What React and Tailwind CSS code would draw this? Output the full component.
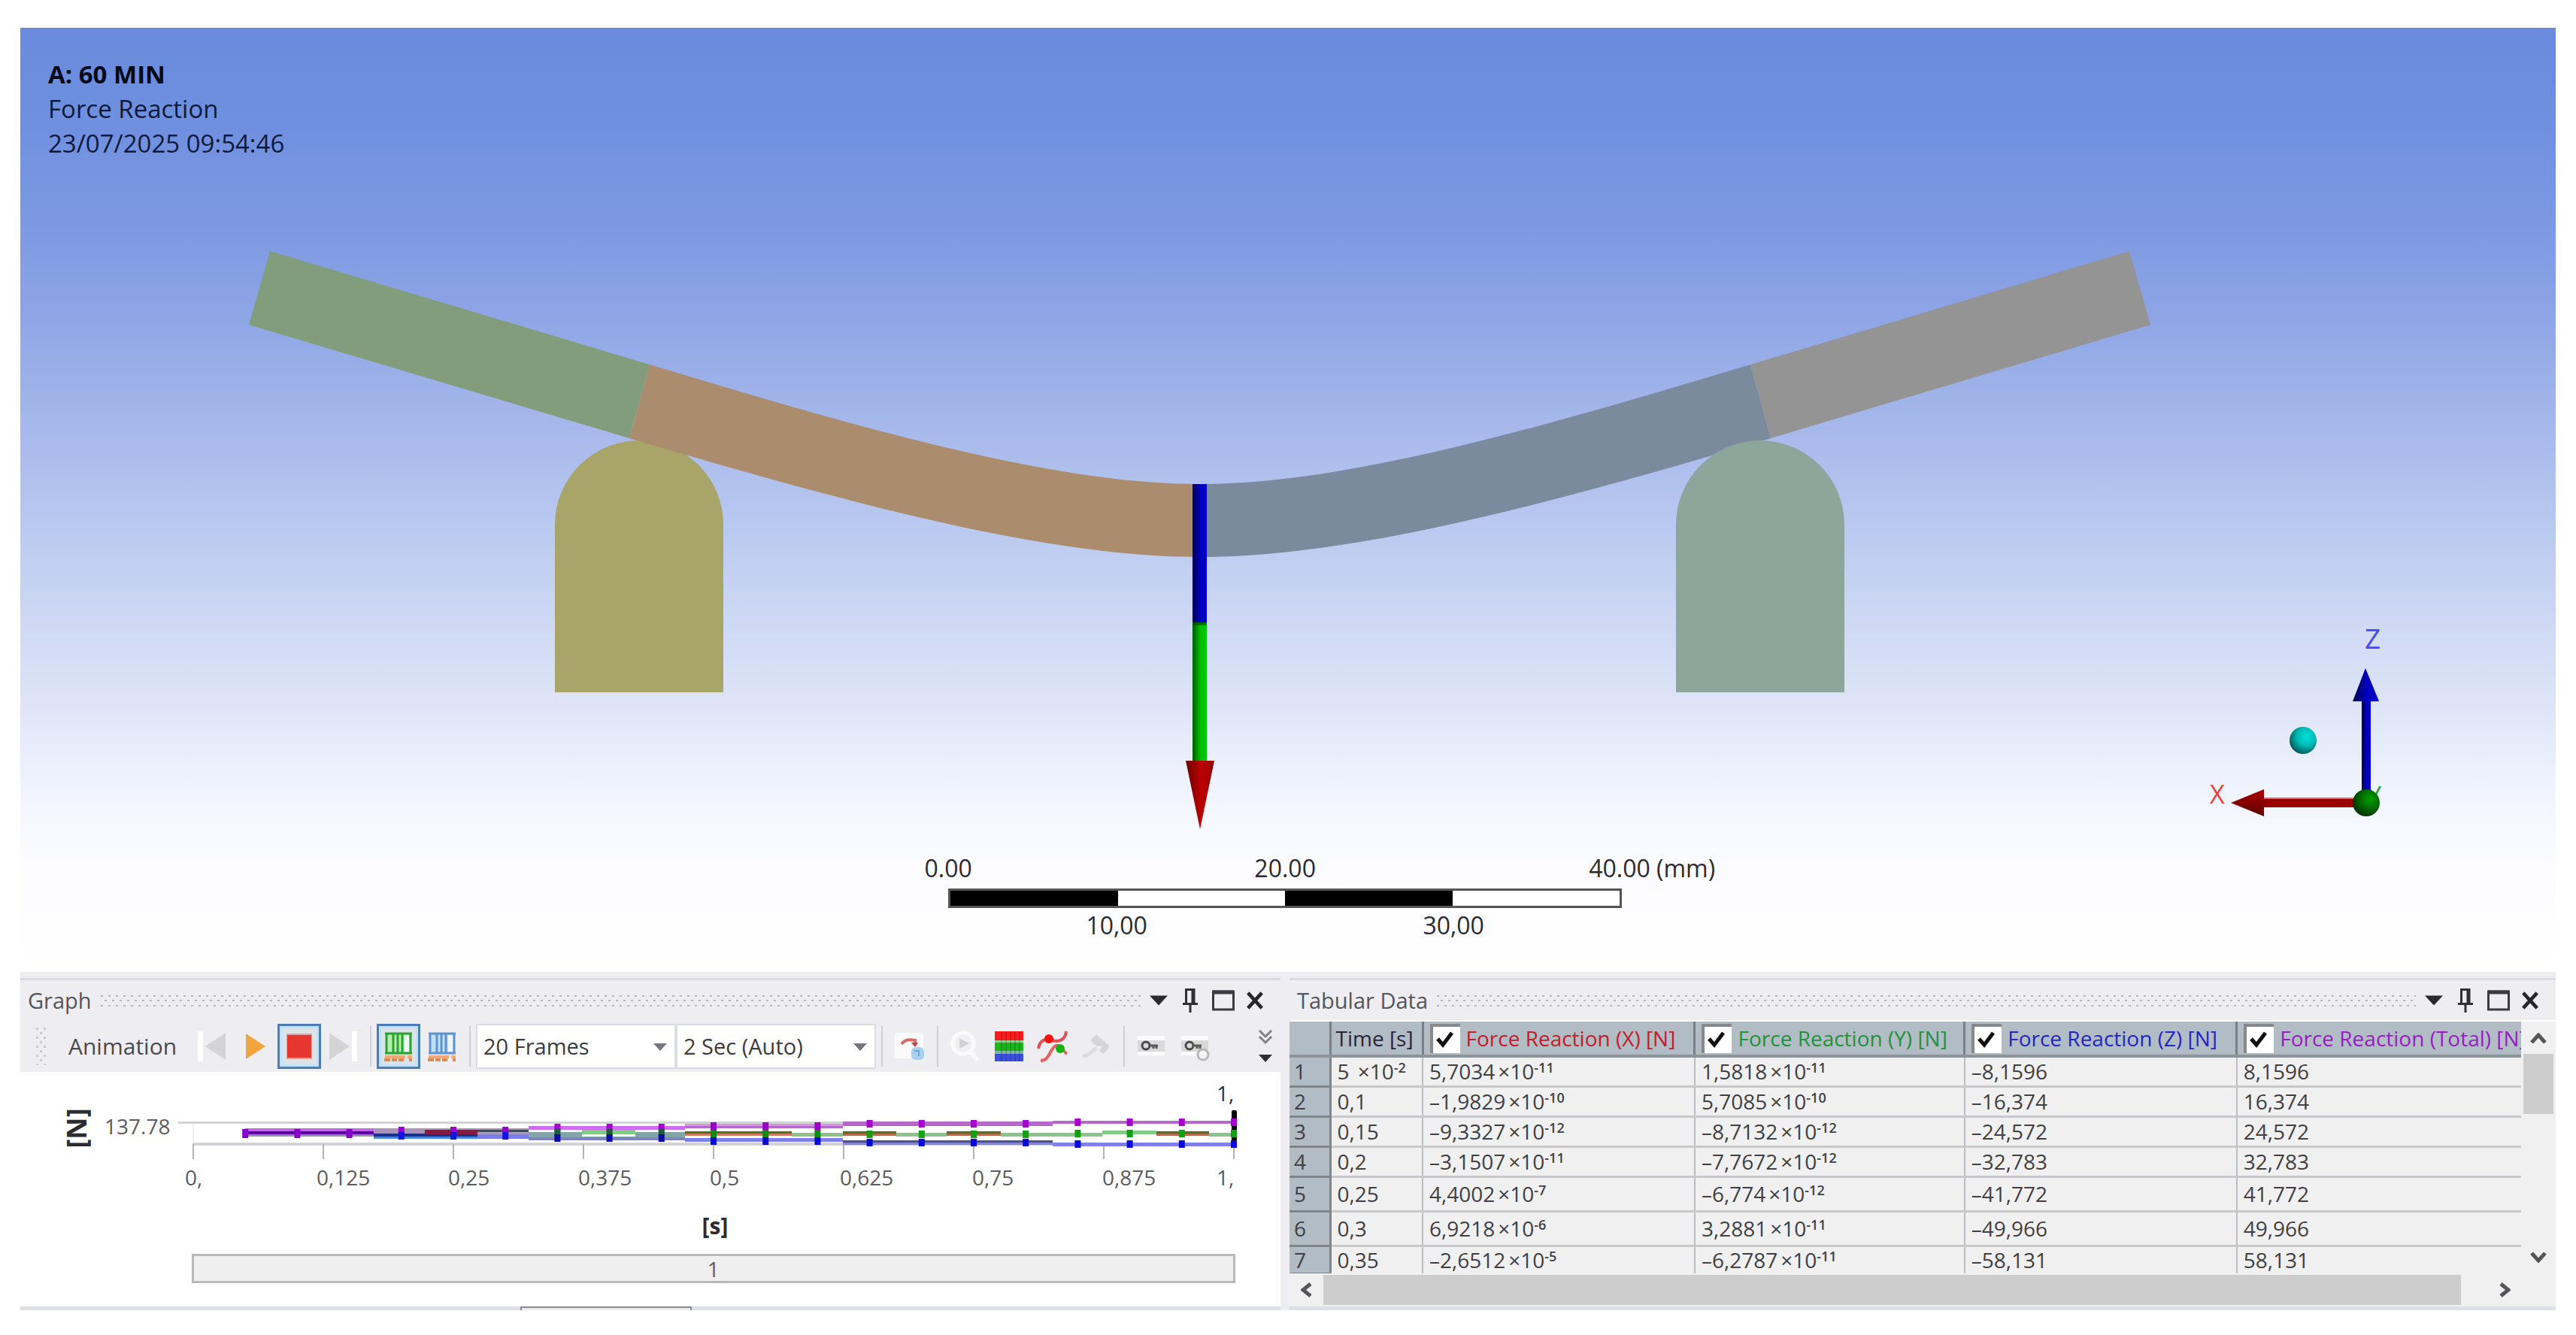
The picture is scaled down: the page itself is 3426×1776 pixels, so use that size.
import React from "react";

/* ---------- 3D viewport ---------- */

function Scene() {
  return (
    <svg viewBox="27 37 3372 1256" className="block w-full" role="img" aria-label="Force reaction on bent beam">
      <defs>
        <linearGradient id="sky" x1="0" y1="37" x2="0" y2="1293" gradientUnits="userSpaceOnUse">
          <stop offset="0" stopColor="#6a8add" />
          <stop offset="0.1" stopColor="#6f8fdf" />
          <stop offset="0.21" stopColor="#7d99e3" />
          <stop offset="0.29" stopColor="#8ba3e5" />
          <stop offset="0.4" stopColor="#a2b5ea" />
          <stop offset="0.53" stopColor="#bac9f0" />
          <stop offset="0.64" stopColor="#d0daf4" />
          <stop offset="0.72" stopColor="#dfe5f7" />
          <stop offset="0.783" stopColor="#ebf0fb" />
          <stop offset="0.83" stopColor="#f4f7ff" />
          <stop offset="0.886" stopColor="#fcfcff" />
          <stop offset="1" stopColor="#ffffff" />
        </linearGradient>
        <linearGradient id="blueShaft">
          <stop offset="0" stopColor="#00004a" />
          <stop offset="0.55" stopColor="#0000c4" />
          <stop offset="1" stopColor="#0000c8" />
        </linearGradient>
        <linearGradient id="greenShaft">
          <stop offset="0" stopColor="#005a00" />
          <stop offset="0.55" stopColor="#00c000" />
          <stop offset="1" stopColor="#00c80a" />
        </linearGradient>
        <linearGradient id="redCone">
          <stop offset="0" stopColor="#6a0000" />
          <stop offset="0.55" stopColor="#c00000" />
          <stop offset="1" stopColor="#8a0000" />
        </linearGradient>
        <linearGradient id="redHead" x1="0" y1="0" x2="0" y2="1">
          <stop offset="0" stopColor="#b00000" />
          <stop offset="1" stopColor="#5a0000" />
        </linearGradient>
        <radialGradient id="cyanBall" cx="0.62" cy="0.36" r="0.65">
          <stop offset="0" stopColor="#00e0d8" />
          <stop offset="0.5" stopColor="#00bdb8" />
          <stop offset="1" stopColor="#00605f" />
        </radialGradient>
        <radialGradient id="greenBall" cx="0.65" cy="0.35" r="0.65">
          <stop offset="0" stopColor="#00a000" />
          <stop offset="0.5" stopColor="#007000" />
          <stop offset="1" stopColor="#003800" />
        </radialGradient>
      </defs>
      <rect x="27" y="37" width="3372" height="1256" fill="url(#sky)" />

      <path d="M738 921V698A111 111 0 0 1 962 698V921Z" fill="#a9a468" />
      <path d="M359 334L864 485L837 583L331 432Z" fill="#829d7b" />
      <path d="M864 485C1140 568 1400 644 1596 644V741C1390 741 1120 667 837 583Z" fill="#ab8d6d" />
      <path d="M2328 485C2052 568 1792 644 1596 644V741C1802 741 2072 667 2355 583Z" fill="#7b8a9c" />
      <path d="M2832 334L2328 485L2355 583L2860 432Z" fill="#949494" />
      <path d="M2229 921V698A111 111 0 0 1 2453 698V921Z" fill="#8ca69c" />

      <rect x="1586" y="644" width="19" height="185" fill="url(#blueShaft)" />
      <rect x="1586" y="828" width="19" height="185" fill="url(#greenShaft)" />
      <rect x="1586" y="828" width="19" height="4" fill="#003c00" opacity="0.6" />
      <path d="M1577 1012H1615L1596 1103Z" fill="url(#redCone)" />

      <text x="3145" y="863" fontSize="37" fill="#4a48e8">Z</text>
      <text x="2939" y="1069" fontSize="34" fill="#ee4040">X</text>
      <text x="3148" y="1071" fontSize="34" fill="#2fa040">Y</text>
      <rect x="3141" y="930" width="12" height="128" fill="url(#blueShaft)" />
      <path d="M3146 889L3129 933H3164Z" fill="url(#blueShaft)" />
      <rect x="3008" y="1062" width="128" height="12" fill="#980000" />
      <rect x="3008" y="1061" width="128" height="2" fill="#f06060" />
      <path d="M2967 1068L3011 1050V1086Z" fill="url(#redHead)" />
      <circle cx="3147" cy="1068" r="18" fill="url(#greenBall)" />
      <circle cx="3063" cy="985" r="18" fill="url(#cyanBall)" />
    </svg>
  );
}

function Ruler() {
  return (
    <div className="absolute bottom-[43px] left-[36.6%] w-[896px] text-[32px] leading-[38px] text-[#2c2c30]">
      <div className="-mx-32 grid grid-cols-[256px_1fr_256px] text-center">
        <span>0.00</span>
        <span>20.00</span>
        <span className="pl-20 whitespace-nowrap">40.00 (mm)</span>
      </div>
      <div className="mt-2 grid h-[26px] grid-cols-4 border-[3px] border-[#555]">
        <span className="bg-black" />
        <span className="bg-white" />
        <span className="bg-black" />
        <span className="bg-white" />
      </div>
      <div className="mt-1 grid grid-cols-2 text-center">
        <span>10,00</span>
        <span>30,00</span>
      </div>
    </div>
  );
}

/* ---------- shared panel title ---------- */

function Dots({ id }) {
  return (
    <svg className="h-4 min-w-0 flex-1" aria-hidden="true">
      <defs>
        <pattern id={id} width="10" height="13" patternUnits="userSpaceOnUse">
          <rect x="0" y="1" width="3" height="2" fill="#b6b6bd" />
          <rect x="5" y="7" width="3" height="2" fill="#b6b6bd" />
        </pattern>
      </defs>
      <rect width="100%" height="16" fill={`url(#${id})`} />
    </svg>
  );
}

function PanelTitle({ id, title }) {
  return (
    <header className="flex h-[56px] items-center border-t-[3px] border-[#d8dae4] pr-3.5 pl-2.5">
      <h2 className="mr-3 text-[29px] leading-9 text-[#55555a]">{title}</h2>
      <Dots id={id} />
      <button type="button" aria-label={`${title} menu`} className="ml-1 flex w-10 justify-center">
        <svg width="24" height="14" viewBox="0 0 26 14"><path d="M0 0H26L13 14Z" fill="#2b2b2b" /></svg>
      </button>
      <button type="button" aria-label={`Pin ${title}`} className="flex w-11 justify-center">
        <svg width="22" height="34" viewBox="0 0 22 34" fill="none" stroke="#2f2f38" strokeWidth="3">
          <path d="M5.500 21V2.500H16V21M14 3V21" /><path d="M1 21.500H21M11 22V33" />
        </svg>
      </button>
      <button type="button" aria-label={`Maximise ${title}`} className="flex w-11 justify-center">
        <svg width="30" height="28" viewBox="0 0 30 28" fill="none" stroke="#3a3a40" strokeWidth="3">
          <rect x="1.500" y="2" width="27" height="24" /><path d="M1 3H29" strokeWidth="5" />
        </svg>
      </button>
      <button type="button" aria-label={`Close ${title}`} className="flex w-10 justify-center">
        <svg width="24" height="24" viewBox="0 0 24 26" stroke="#26262c" strokeWidth="5"><path d="M2 2L22 24M22 2L2 24" /></svg>
      </button>
    </header>
  );
}

/* ---------- toolbar ---------- */

function ToolButton({ label, active, children }) {
  return (
    <button
      type="button"
      aria-label={label}
      className={
        active
          ? "flex h-[60px] w-[58px] items-center justify-center border-[3px] border-[#4c7db5] bg-[#dbe3e8] shadow-[inset_0_0_0_3px_#bfe2f8]"
          : "flex h-[60px] w-[58px] items-center justify-center"
      }
    >
      {children}
    </button>
  );
}

const Separator = () => <span className="mx-[7px] h-[54px] w-0.5 shrink-0 bg-[#cfcfd4]" />;

function FilmIcon({ line, fill }) {
  return (
    <svg width="38" height="40" viewBox="0 0 38 40">
      <rect x="2" y="3" width="34" height="27" fill={fill} />
      <rect x="27" y="5" width="6" height="22" fill="#eef4f8" />
      <path d="M3 2V30M12 2V30M18 2V30M24 2V30M35 2V30M1 3H37M1 29H37" stroke={line} strokeWidth="3" fill="none" />
      <path d="M1 34H28M31 34H37" stroke="#f0a878" strokeWidth="4" />
      <path d="M0 38H8M10 38H17M19 38H26M33 38H37" stroke="#e08a50" strokeWidth="4" />
    </svg>
  );
}

function Combo({ label, value }) {
  return (
    <span className="relative h-[60px] w-[266px] border-2 border-[#dcdce4] bg-white">
      <select aria-label={label} className="h-full w-full appearance-none bg-transparent pl-2 text-[29px] text-[#3c3c40] outline-none">
        <option>{value}</option>
      </select>
      <svg className="pointer-events-none absolute top-6 right-2.5" width="18" height="10" viewBox="0 0 18 10"><path d="M0 0H18L9 10Z" fill="#76767c" /></svg>
    </span>
  );
}

function KeyIcon({ badge }) {
  return (
    <svg width="40" height="40" viewBox="0 0 40 40" fill="none">
      <rect x="1" y="6" width="36" height="26" fill="#fbfbfb" />
      <rect x="1" y="12" width="36" height="15" fill="#d9d9d9" />
      <circle cx="12" cy="19" r="5" stroke="#4a4a4a" strokeWidth="3" />
      <path d="M17 19H28M22 19V23M26 19V23" stroke="#5a5a5a" strokeWidth="3" />
      {badge && <circle cx="30" cy="31" r="7" stroke="#b8b8b8" strokeWidth="3" fill="#f4f4f4" />}
    </svg>
  );
}

function Toolbar() {
  return (
    <div role="toolbar" aria-label="Animation" className="flex h-[69px] items-center pl-5">
      <svg width="16" height="50" viewBox="0 0 16 50" className="shrink-0">
        {[0, 1, 2, 3, 4, 5, 6, 7, 8].map((i) => (
          <g key={i} fill="#c9c9ce">
            {i % 2 === 0 ? (
              <>
                <rect x="1" y={i * 6} width="3" height="3" />
                <rect x="11" y={i * 6} width="3" height="3" />
              </>
            ) : (
              <rect x="6" y={i * 6} width="3" height="3" />
            )}
          </g>
        ))}
      </svg>
      <span className="ml-7 w-[162px] text-[30px] leading-9 text-[#4a4a4e]">Animation</span>
      <ToolButton label="Previous frame">
        <svg width="38" height="40" viewBox="0 0 38 40"><rect width="7" height="40" fill="#fff" /><path d="M37 2V38L10 20Z" fill="#d4d4d6" /></svg>
      </ToolButton>
      <ToolButton label="Play">
        <svg width="26" height="34" viewBox="0 0 26 34"><path d="M0 0V34L26 17Z" fill="#f0a63c" /></svg>
      </ToolButton>
      <ToolButton label="Stop" active>
        <svg width="34" height="34" viewBox="0 0 34 34"><rect width="34" height="34" fill="#e8a09c" /><rect x="1" y="2" width="32" height="30" fill="#e53730" /></svg>
      </ToolButton>
      <ToolButton label="Next frame">
        <svg width="38" height="40" viewBox="0 0 38 40"><path d="M1 2V38L28 20Z" fill="#d4d4d6" /><rect x="31" width="7" height="40" fill="#fff" /></svg>
      </ToolButton>
      <Separator />
      <ToolButton label="Distributed frames" active>
        <FilmIcon line="#2aa336" fill="#b4f0a8" />
      </ToolButton>
      <ToolButton label="Result set frames">
        <FilmIcon line="#5f93cf" fill="#c0e0fa" />
      </ToolButton>
      <Separator />
      <Combo label="Frames" value="20 Frames" />
      <Combo label="Duration" value="2 Sec (Auto)" />
      <Separator />
      <ToolButton label="Update range">
        <svg width="42" height="42" viewBox="0 0 42 42" fill="none">
          <rect x="1" y="3" width="38" height="34" rx="4" fill="#fafafa" />
          <path d="M10 18C15 11 22 12 28 13V20" stroke="#dc6a68" strokeWidth="4" />
          <path d="M23 16H32L28 22Z" fill="#c84040" />
          <rect x="23" y="22" width="17" height="17" rx="6" fill="#a8cff0" />
          <path d="M27 27H33V34" stroke="#6fa6d8" strokeWidth="2" />
        </svg>
      </ToolButton>
      <Separator />
      <ToolButton label="Zoom to fit">
        <svg width="40" height="42" viewBox="0 0 40 42" fill="none">
          <circle cx="17" cy="17" r="14" stroke="#fbfbfb" strokeWidth="5" fill="#f0f0f2" />
          <path d="M12 10V24L25 17Z" fill="#d2d2d6" />
          <path d="M27 29L36 39" stroke="#f8f8fa" strokeWidth="6" />
        </svg>
      </ToolButton>
      <ToolButton label="Contour bands">
        <svg width="38" height="40" viewBox="0 0 38 40">
          <rect width="38" height="12" fill="#fa1c1c" />
          <rect y="12" width="38" height="3" fill="#8fd08f" />
          <rect y="15" width="38" height="11" fill="#1cb51c" />
          <rect y="26" width="38" height="4" fill="#78b8a0" />
          <rect y="30" width="38" height="10" fill="#3c50e0" />
          <path d="M9 0V40M15 0V40M21 0V40M27 0V40M33 0V40" stroke="#000" strokeOpacity="0.16" strokeWidth="2" />
        </svg>
      </ToolButton>
      <ToolButton label="Min max probes">
        <svg width="42" height="42" viewBox="0 0 42 42" fill="none">
          <path d="M2 24C4 12 12 10 20 13C30 16 38 12 39 1" stroke="#e05058" strokeWidth="4" />
          <path d="M5 40C18 40 17 22 26 20C32 19 35 28 40 31" stroke="#e86060" strokeWidth="4" />
          <circle cx="16" cy="11" r="6" fill="#fa1010" />
          <circle cx="31" cy="24" r="6" fill="#12b512" />
        </svg>
      </ToolButton>
      <ToolButton label="Vector display">
        <svg width="40" height="40" viewBox="0 0 40 40" fill="none">
          <path d="M2 33C10 33 14 27 20 22" stroke="#dcdce0" strokeWidth="5" />
          <path d="M12 12L20 4L38 20L30 30L24 26L28 19L20 20Z" fill="#d6d6da" />
        </svg>
      </ToolButton>
      <Separator />
      <ToolButton label="Create key frame"><KeyIcon /></ToolButton>
      <ToolButton label="Key frame options"><KeyIcon badge /></ToolButton>
      <button type="button" aria-label="More tools" className="mr-2.5 ml-auto">
        <svg width="20" height="44" viewBox="0 0 20 44" fill="none">
          <path d="M2 1L10 9L18 1M2 9L10 17L18 9" stroke="#808086" strokeWidth="3" />
          <path d="M1 33H19L10 43Z" fill="#2e2e34" />
        </svg>
      </button>
    </div>
  );
}

/* ---------- chart ---------- */

const X0 = 257;
const STEP = 69.2;
const bands = [
  [326, 497, 1500, 4, "#c168ea"], [326, 497, 1504, 4, "#5f00a6"], [326, 497, 1508, 3, "#918cb0"],
  [497, 703, 1500, 7, "#ab94b8"], [497, 635, 1507, 4, "#1c2f8a"], [497, 635, 1511, 3, "#4a86dc"],
  [565, 635, 1502, 6, "#8a1a3f"], [635, 703, 1502, 3, "#3c5050"], [635, 703, 1505, 3, "#a39cc4"], [635, 703, 1508, 6, "#7b7bea"],
  [703, 911, 1497, 5, "#d36af5"], [703, 911, 1505, 7, "#82a5aa"], [774, 845, 1502, 6, "#80cc80"], [774, 845, 1508, 3, "#ffffff"], [703, 911, 1512, 4, "#8080c4"],
  [911, 1121, 1494, 3, "#d695e0"], [911, 1121, 1497, 3, "#b56acb"], [911, 1121, 1513, 5, "#7f7fea"],
  [911, 1053, 1504, 3, "#55701a"], [911, 1053, 1507, 3, "#d07a62"], [1053, 1121, 1506, 5, "#8ac48a"],
  [1121, 1400, 1491, 6, "#b567cc"], [1121, 1400, 1516, 3, "#50508f"], [1121, 1400, 1519, 3, "#8585d8"],
  [1121, 1192, 1504, 3, "#55701a"], [1121, 1192, 1507, 3, "#b5694f"], [1192, 1259, 1506, 5, "#8ac48a"],
  [1259, 1331, 1504, 3, "#55701a"], [1259, 1331, 1507, 3, "#b5694f"], [1331, 1466, 1506, 5, "#8ac48a"],
  [1400, 1641, 1490, 4, "#b567cc"], [1400, 1641, 1519, 5, "#7f7fea"],
  [1466, 1538, 1503, 5, "#82cc86"], [1538, 1608, 1504, 3, "#55701a"], [1538, 1608, 1507, 3, "#b5694f"], [1608, 1641, 1506, 5, "#8ac48a"],
];
const ticks = ["0,", "0,125", "0,25", "0,375", "0,5", "0,625", "0,75", "0,875", "1,"];
const tickShift = [-11, -9, -7, -7, -5, -5, -2, -2, -23];

function marker(k) {
  if (k <= 3) return [[1506, "#8a00cc"]];
  if (k <= 6) return [[1503, "#9a00d0"], [1510, "#1414e0"]];
  if (k <= 9) return [[1499, "#a800d8"], [1506, "#1f5a3c"], [1513, "#0a0aa8"]];
  if (k <= 12) return [[1497, "#9a00c8"], [1507, "#108a10"], [1517, "#0a0ad0"]];
  if (k <= 16) return [[1494, "#a800d0"], [1508, "#10a010"], [1519, "#0a0ad8"]];
  return [[1492, "#a800d0"], [1507, "#10a010"], [1521, "#0a0ae0"]];
}

function Chart() {
  return (
    <svg viewBox="27 1425 1676 234" className="block w-full text-[28px]" role="img" aria-label="Force reaction over time">
      <g fill="#d3d3d5">
        <rect x="237" y="1491" width="1404" height="3" />
        <rect x="256" y="1519" width="1386" height="4" />
        <rect x="256" y="1494" width="2" height="26" fill="#eeeeee" />
        {ticks.map((t, i) => (
          <rect key={t + i} x={X0 - 1 + i * 173} y="1521" width="2" height="20" fill="#b4b4b8" />
        ))}
      </g>
      {bands.map(([a, b, y, h, c]) => (
        <rect key={`${a}-${y}-${c}`} x={a} y={y} width={b - a} height={h} fill={c} />
      ))}
      <rect x="1638" y="1476" width="7" height="49" rx="2" fill="#000" />
      {Array.from({ length: 20 }, (_, i) => i + 1).map((k) =>
        marker(k).map(([y, c]) => <rect key={`${k}-${y}`} x={X0 + k * STEP - 4} y={y - 5} width="8" height={k <= 3 ? 12 : 10} fill={c} />)
      )}
      <g fill="#5c5c60">
        {ticks.map((t, i) => (
          <text key={t + i} x={X0 + i * 173 + tickShift[i]} y="1576">{t}</text>
        ))}
        <text x="139" y="1508">137.78</text>
      </g>
      <text x="1618" y="1464" fill="#333">1,</text>
      <text x="951" y="1641" textAnchor="middle" fontSize="30" fontWeight="700" fill="#2c2c30">[s]</text>
      <text transform="translate(115 1500) rotate(-90)" textAnchor="middle" fontSize="36" fontWeight="700" fill="#2c2c30">[N]</text>
    </svg>
  );
}

function GraphPanel() {
  return (
    <section className="flex min-w-0 flex-col">
      <PanelTitle id="graphDots" title="Graph" />
      <Toolbar />
      <div className="flex-1 bg-white">
        <Chart />
        <div className="mt-2 pr-[3.6%] pb-[31px] pl-[13.6%]">
          <button type="button" className="block h-[39px] w-full border-[3px] border-[#b9b9bb] bg-[#efefef] text-[28px] leading-[34px] text-[#5c5c60]">1</button>
        </div>
      </div>
      <div className="h-[5px] bg-[#dde1e6] pl-[39.7%]">
        <div className="h-full w-[228px] border-x-2 border-t-2 border-[#8a8a8c] bg-[#ececec]" />
      </div>
    </section>
  );
}

/* ---------- table ---------- */

const rows = [
  [["5 ", "-2"], ["5,7034", "-11"], ["1,5818", "-11"], "–8,1596", "8,1596"],
  ["0,1", ["–1,9829", "-10"], ["5,7085", "-10"], "–16,374", "16,374"],
  ["0,15", ["–9,3327", "-12"], ["–8,7132", "-12"], "–24,572", "24,572"],
  ["0,2", ["–3,1507", "-11"], ["–7,7672", "-12"], "–32,783", "32,783"],
  ["0,25", ["4,4002", "-7"], ["–6,774", "-12"], "–41,772", "41,772"],
  ["0,3", ["6,9218", "-6"], ["3,2881", "-11"], "–49,966", "49,966"],
  ["0,35", ["–2,6512", "-5"], ["–6,2787", "-11"], "–58,131", "58,131"],
];
const columns = [
  { id: "fx", label: "Force Reaction (X) [N]", color: "text-[#c0202c]" },
  { id: "fy", label: "Force Reaction (Y) [N]", color: "text-[#23933a]" },
  { id: "fz", label: "Force Reaction (Z) [N]", color: "text-[#2426c4]" },
  { id: "ft", label: "Force Reaction (Total) [N]", color: "text-[#9a1cc4]" },
];

function Value({ v }) {
  if (!Array.isArray(v)) return v;
  return (
    <>
      {v[0]}
      <span className="ml-1 font-medium">×10</span>
      <sup className="text-[18px] leading-none font-semibold">{v[1]}</sup>
    </>
  );
}

function DataTable() {
  return (
    <table className="w-full table-fixed border-collapse text-left text-[28px] leading-[34px] whitespace-nowrap">
      <colgroup>
        <col className="w-[54px]" />
        <col className="w-[123px]" />
        <col className="w-[22.1%]" />
        <col className="w-[21.9%]" />
        <col className="w-[22.1%]" />
        <col />
      </colgroup>
      <thead>
        <tr className="h-[46px] border-b-4 border-[#8f9498] bg-[#b1bcc5]">
          <td className="border-r-[3px] border-[#7b8084]" />
          <th scope="col" className="border-r-[3px] border-[#7b8084] p-0 pl-1.5 font-medium text-[#26263c]">Time [s]</th>
          {columns.map((c) => (
            <th key={c.id} scope="col" className="overflow-hidden border-r-[3px] border-[#7b8084] p-0 pl-2 font-medium last:border-r-0">
              <div className="flex items-center">
                <span className="relative mr-2 h-[39px] w-10 shrink-0">
                  <input id={c.id} type="checkbox" defaultChecked className="peer block h-full w-full appearance-none border-t-4 border-l-4 border-[#85898c] bg-white" />
                  <svg className="pointer-events-none absolute top-2.5 left-2 hidden peer-checked:block" width="24" height="22" viewBox="0 0 24 22">
                    <path d="M2 10L9 18L21 2" fill="none" stroke="#111" strokeWidth="5" />
                  </svg>
                </span>
                <label htmlFor={c.id} className={c.color}>{c.label}</label>
              </div>
            </th>
          ))}
        </tr>
      </thead>
      <tbody className="text-[#404044]">
        {rows.map((r, i) => (
          <tr key={i} className={i < 4 ? "h-10 border-b-[3px] border-[#c9c9cb]" : "h-[46px] border-b-[3px] border-[#c9c9cb] last:h-9 last:border-b-0"}>
            <th scope="row" className="border-r-[3px] border-b-[3px] border-[#7f868b] bg-[#b1bcc5] p-0 pl-1.5 font-normal">{i + 1}</th>
            {r.map((v, j) => (
              <td key={j} className="border-r-2 border-[#b9bcc0] p-0 pl-2 leading-[30px] last:border-r-0">
                <Value v={v} />
              </td>
            ))}
          </tr>
        ))}
      </tbody>
    </table>
  );
}

function Chevron({ d, w = 22, h = 14 }) {
  return (
    <svg width={w} height={h} viewBox={`0 0 ${w} ${h}`} fill="none" stroke="#55555a" strokeWidth="5"><path d={d} /></svg>
  );
}

function TablePanel() {
  return (
    <section className="flex min-w-0 flex-col">
      <PanelTitle id="tableDots" title="Tabular Data" />
      <div className="flex border-t-2 border-white">
        <div className="h-[335px] min-w-0 flex-1 overflow-hidden bg-[#f0f0f0]">
          <DataTable />
        </div>
        <div className="flex w-[46px] flex-col items-center bg-[#f0f0f0]">
          <button type="button" aria-label="Scroll up" className="flex h-[43px] items-center"><Chevron d="M2 13L11 3L20 13" /></button>
          <div className="h-20 w-10 bg-[#cdcdcd]" />
          <button type="button" aria-label="Scroll down" className="mt-auto flex h-[43px] items-center"><Chevron d="M2 1L11 11L20 1" /></button>
        </div>
      </div>
      <div className="flex h-[44px] items-center bg-[#f0f0f0]">
        <button type="button" aria-label="Scroll left" className="flex w-[45px] justify-center"><Chevron d="M13 2L3 10L13 18" w={16} h={20} /></button>
        <div className="h-10 flex-1 bg-[#cdcdcd]" />
        <button type="button" aria-label="Scroll right" className="mr-2.5 flex w-[116px] justify-center"><Chevron d="M3 2L13 10L3 18" w={16} h={20} /></button>
      </div>
      <div className="h-[5px] bg-[#dde1e6]" />
    </section>
  );
}

export default function App() {
  return (
    <main className="min-h-screen bg-white px-[27px] pt-[37px] font-['Open_Sans','Noto_Sans',sans-serif]">
      <section className="relative">
        <Scene />
        <div className="absolute top-[39px] left-[37px] text-[33px] leading-[46px] text-[#0e1a3c]">
          <h1 className="font-bold text-[#050a18]">A: 60 MIN</h1>
          <p>Force Reaction</p>
          <p>23/07/2025 09:54:46</p>
        </div>
        <Ruler />
      </section>
      <div className="bg-[#eeedf2] pt-2">
        <div className="grid grid-cols-[1676fr_1684fr] gap-3">
          <GraphPanel />
          <TablePanel />
        </div>
      </div>
    </main>
  );
}
